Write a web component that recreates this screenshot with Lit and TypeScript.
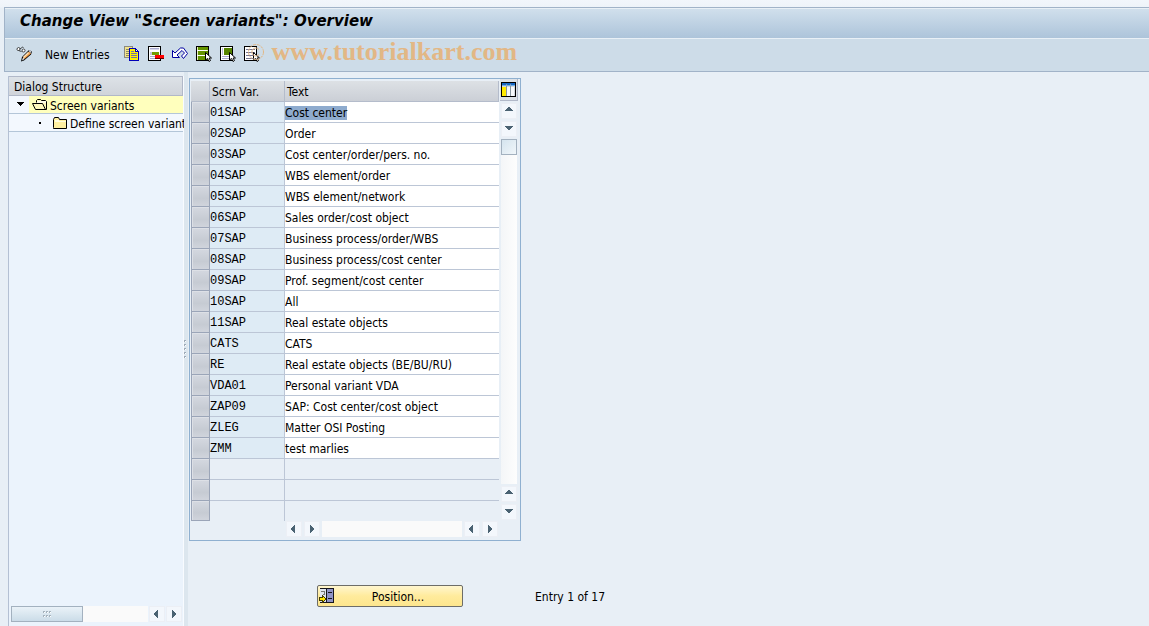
import { LitElement, html, svg, css } from "lit";
import { customElement } from "lit/decorators.js";
import { classMap } from "lit/directives/class-map.js";

interface Variant {
  code: string;
  text: string;
}

const VARIANTS: Variant[] = [
  { code: "01SAP", text: "Cost center" },
  { code: "02SAP", text: "Order" },
  { code: "03SAP", text: "Cost center/order/pers. no." },
  { code: "04SAP", text: "WBS element/order" },
  { code: "05SAP", text: "WBS element/network" },
  { code: "06SAP", text: "Sales order/cost object" },
  { code: "07SAP", text: "Business process/order/WBS" },
  { code: "08SAP", text: "Business process/cost center" },
  { code: "09SAP", text: "Prof. segment/cost center" },
  { code: "10SAP", text: "All" },
  { code: "11SAP", text: "Real estate objects" },
  { code: "CATS", text: "CATS" },
  { code: "RE", text: "Real estate objects (BE/BU/RU)" },
  { code: "VDA01", text: "Personal variant VDA" },
  { code: "ZAP09", text: "SAP: Cost center/cost object" },
  { code: "ZLEG", text: "Matter OSI Posting" },
  { code: "ZMM", text: "test marlies" },
];
const EMPTY_ROWS = [1, 2, 3];

const icon = (content: unknown, w = 16, h = 16) =>
  html`<svg width=${w} height=${h} viewBox="0 0 ${w} ${h}" shape-rendering="crispEdges" aria-hidden="true">${content}</svg>`;

const cursor = svg`<path d="M9.500 6.500v7.500l2-1.500l1.500 3l1.500-1l-1.500-2.500h2.500z" fill="#fff" stroke="#000" stroke-width="1" shape-rendering="auto"/>`;
const sheet = svg`<path d="M0 0h13v15h-13z" fill="#000"/><path d="M1 1h11v13h-11z" fill="#fff"/>`;

const icons = {
  display: icon(svg`
    <g shape-rendering="auto">
      <path d="M1 3.500q0-2 1.500-2t1.500 1.500t-1.500 1.500t-1.500-1zM4 3l2-1.500M6 5q0-2 1.500-2t1.500 1.500t-1.500 1.500t-1.500-1zM2.500 4.500l3 1M6 1l1.500 0.500" fill="#fff" stroke="#222" stroke-width="0.800"/>
      <path d="M5 15.500l1-4.500l7-7l3 1.500l-1 3l-7 6z" fill="#000"/>
      <path d="M7 11l6-5.500l2 2l-6.500 5.500z" fill="#f5a04a"/>
      <path d="M7 11l5-5l1 1l-5 5z" fill="#ffe5bd"/>
      <path d="M12.500 5l1-1l2 1.500l-1 1.500z" fill="#c9cad0"/>
      <path d="M6 14.500l1-3l1.500 1.500z" fill="#fff"/>
    </g>`),
  copy: icon(svg`
    <path d="M0 0h9v12h-9z" fill="#8a8a80"/><path d="M1 1h7v10h-7z" fill="#f4e38c"/>
    <path d="M2 3h3v1h-3zM2 5h3v1h-3zM2 7h3v1h-3zM2 9h3v1h-3z" fill="#8a8a60"/>
    <path d="M5 2h7v1h1v1h1v1h1v10h-10z" fill="#0000b8"/><path d="M6 3h5v3h3v8h-8z" fill="#fff200"/>
    <path d="M12 4v1h1v-1z" fill="#fff"/><path d="M7 5h3v1h-3zM7 7h6v1h-6zM7 9h6v1h-6zM7 11h6v1h-6z" fill="#7474a0"/>`),
  remove: icon(svg`${sheet}
    <path d="M2 2h9v2h-9zM2 10h7v1h-7zM2 12h9v1h-9z" fill="#a8a8cf"/><path d="M2 3h9v1h-9z" fill="#d8d8ec"/>
    <path d="M4 6h7v3h-7z" fill="#739d00"/><path d="M2 6h2v3h-2z" fill="#c8c8db"/>
    <path d="M7 9h9v4h-9z" fill="#ff0000"/><path d="M7 12h9v1h-9z" fill="#680000"/>`),
  undo: icon(svg`
    <path d="M0.500 4.500v7h7l-2.500-2.500l5-4.500l2.500 2.500l-3 3l2 2.500l4-5l-4-5.500h-3l-5.500 5z" fill="#fff" stroke="#0000a0" stroke-width="1" shape-rendering="auto"/>`),
  selectAll: icon(svg`${sheet}
    <path d="M1 1h11v13h-11z" fill="#e7efbf"/><path d="M2 1h10v3h-10zM2 5h10v4h-10zM2 10h10v4h-10z" fill="#649400"/>
    <path d="M1 4h10v1h-10zM1 9h8v1h-8z" fill="#fff"/>${cursor}`),
  selectBlock: icon(svg`${sheet}
    <path d="M4 2h8v7h-8z" fill="#568400"/><path d="M2 2h1v7h-1z" fill="#b9b9da"/>
    <path d="M2 10h7v1h-7zM2 12h7v1h-7z" fill="#a8a8cf"/>${cursor}`),
  deselect: icon(svg`${sheet}
    <path d="M2 3h9v1h-9zM2 6h9v1h-9zM2 9h7v1h-7zM2 12h7v1h-7z" fill="#777793"/>${cursor}`),
  config: icon(svg`
    <path d="M0 0h15v15h-15z" fill="#000"/><path d="M1 1h13v3h-13z" fill="#1767c4"/><path d="M1 4h13v10h-13z" fill="#d4d8dd"/>
    <path d="M1 5h4v9h-4z" fill="#ffea00"/><path d="M6 5h3v9h-3zM10 5h3v9h-3z" fill="#f7f9fb"/>
    <path d="M5 2h1v12h-1zM9 2h1v12h-1z" fill="#89959f"/><path d="M1 3h13v1h-13z" fill="#74aee3"/>`, 15, 15),
  folderOpen: icon(svg`
    <path d="M4.500 4.500v-2l1-1h3l1 1h4l1 1v8h-11l-3-6h10l3 6" fill="#fff9bd" stroke="#000" shape-rendering="auto"/>
    <path d="M5 3h9v2h-9z" fill="#fffde7"/>`, 16, 13),
  folder: icon(svg`
    <path d="M0.500 10.500v-8l1-2h4l1 2h7v9h-13z" fill="#fff0a0" stroke="#000" shape-rendering="auto"/>
    <path d="M2 3h4v1h7v1h-11z" fill="#fffde0"/>`, 15, 12),
  position: icon(svg`
    <path d="M1 0h14v15h-14z" fill="#16161c"/><path d="M1 1h6v13h-6z" fill="#dfe5ef"/><path d="M8 1h6v13h-6z" fill="#8f93c6"/>
    <path d="M2 3h4v1h-4zM4 6h2v1h-2zM5 4h1v2h-1z" fill="#777"/><path d="M9 4h4v1h-4zM9 10h4v1h-4z" fill="#16161c"/>
    <path d="M0 9h3v-2h1v1h1v1h1v1h1v2h-1v1h-1v1h-1v1h-1v-2h-3z" fill="#433c00"/><path d="M1 10h3v-1h1v1h1v2h-1v1h-1v-1h-3z" fill="#ffe600"/>`),
};

const arrows: Record<string, string> = {
  up: "M4 0h2v1h1v1h1v1h1v1h-8v-1h1v-1h1v-1h1z",
  down: "M1 1h8v1h-1v1h-1v1h-1v1h-2v-1h-1v-1h-1v-1h-1z",
  left: "M6 0v8h-1v-1h-1v-1h-1v-1h-1v-2h1v-1h1v-1h1v-1z",
  right: "M3 0v8h1v-1h1v-1h1v-1h1v-2h-1v-1h-1v-1h-1v-1z",
};

const scrollButton = (dir: string, label: string) =>
  html`<button class="scroll-btn" aria-label=${label}>${icon(svg`<path d=${arrows[dir]} fill="#4a6272"/>`, 10, 8)}</button>`;

const shared = css`
  * {
    box-sizing: border-box;
  }
  button {
    margin: 0;
    padding: 0;
    border: 0;
    background: none;
    color: inherit;
    font: inherit;
    display: flex;
    align-items: center;
    justify-content: center;
  }
  svg {
    display: block;
    flex: none;
  }
  .scroll-btn {
    width: 16px;
    height: 16px;
    flex: none;
    background: #f3f7fc;
    border: 1px solid #eceff5;
  }
`;

@customElement("dialog-tree")
export class DialogTree extends LitElement {
  static styles = [
    shared,
    css`
      :host {
        display: flex;
        flex-direction: column;
        width: 176px;
        flex: none;
        background: #ebf3fc;
        border-left: 1px solid #b4c0d3;
        border-right: 1px solid #f8fbff;
      }
      .heading {
        margin: 0;
        height: 20px;
        padding-left: 5px;
        font-size: 12px;
        font-weight: normal;
        line-height: 20px;
        background: linear-gradient(#dde2e7, #d0d4da);
        border: solid #b1b8c8;
        border-width: 1px 1px 1px 0;
      }
      .tree {
        list-style: none;
        margin: 0;
        padding: 0;
        flex: 1;
      }
      .node {
        display: flex;
        height: 18px;
        align-items: center;
        border-bottom: 1px solid #b4c6d8;
        background: #f3f8fe;
      }
      .twisty {
        width: 20px;
        padding-left: 2px;
        flex: none;
      }
      .link {
        flex: 1;
        height: 17px;
        display: flex;
        align-items: center;
        gap: 2px;
        padding-left: 3px;
        color: inherit;
        text-decoration: none;
        white-space: nowrap;
      }
      .link.current {
        background: #ffffbd;
      }
      .label {
        padding-top: 2px;
      }
      .child {
        padding-left: 21px;
      }
      .bullet {
        width: 2px;
        height: 2px;
        margin: 0 9px;
        flex: none;
        background: #000;
      }
      .scroll {
        display: flex;
        gap: 1px;
        padding: 0 1px 0 2px;
        margin-bottom: 4px;
      }
      .track {
        flex: 1;
        background: #fafafa;
      }
      .thumb {
        width: 72px;
        height: 16px;
        border: 1px solid #a3b1bf;
        background: linear-gradient(#eaf2f8, #cbdce8);
        display: flex;
        align-items: center;
        justify-content: center;
      }
    `,
  ];

  render() {
    return html`
      <h2 class="heading">Dialog Structure</h2>
      <ul class="tree">
        <li class="node">
          <button class="twisty" aria-label="Collapse">${icon(svg`<path d="M1 1h7v1h-1v1h-1v1h-1v1h-1v-1h-1v-1h-1v-1h-1z" fill="#000"/>`, 9, 8)}</button>
          <a class="link current" href="#variants">${icons.folderOpen}<span class="label">Screen variants</span></a>
        </li>
        <li class="node child">
          <span class="bullet"></span>
          <a class="link" href="#define">${icons.folder}<span class="label">Define screen variant</span></a>
        </li>
      </ul>
      <div class="scroll">
        <div class="track">
          <div class="thumb">
            ${icon(svg`<path d="M0 0h2v2h-2zM3 0h2v2h-2zM6 0h2v2h-2zM0 4h2v2h-2zM3 4h2v2h-2zM6 4h2v2h-2z" fill="#a4b2bd"/><path d="M1 1h1v1h-1zM4 1h1v1h-1zM7 1h1v1h-1zM1 5h1v1h-1zM4 5h1v1h-1zM7 5h1v1h-1z" fill="#fff"/>`, 8, 6)}
          </div>
        </div>
        ${scrollButton("left", "Scroll left")}${scrollButton("right", "Scroll right")}
      </div>
    `;
  }
}

@customElement("variant-table")
export class VariantTable extends LitElement {
  static styles = [
    shared,
    css`
      :host {
        display: grid;
        grid-template-columns: auto 18px;
        column-gap: 1px;
        width: max-content;
        border: 1px solid #8fb0d0;
        padding: 0 2px 3px 1px;
      }
      .grid {
        margin-top: 2px;
        border-collapse: separate;
        border-spacing: 0;
        table-layout: fixed;
        width: 308px;
      }
      .c-sel {
        width: 19px;
      }
      .c-code {
        width: 75px;
      }
      th,
      td {
        padding: 0;
        height: 21px;
        text-align: left;
        font-weight: normal;
      }
      th {
        background: linear-gradient(#dde1e5, #cbcfd6);
        border-bottom: 1px solid #b4bccb;
        border-right: 1px solid #b4bccb;
        padding: 2px 0 0 2px;
        line-height: 18px;
      }
      td {
        border-bottom: 1px solid #bcc6d6;
      }
      .code {
        background: #deebf5;
        border-right: 1px solid #bcc6d6;
        font: 12px/18px "Liberation Mono", "Courier New", monospace;
        padding-top: 2px;
      }
      .text {
        background: #fff;
      }
      .empty {
        background: transparent;
      }
      tr:last-child td {
        border-bottom: 0;
        height: 20px;
      }
      .field {
        display: block;
        width: 100%;
        height: 20px;
        margin: 0;
        padding: 2px 0 0;
        border: 0;
        outline: 0;
        background: none;
        font: inherit;
        color: inherit;
      }
      .field::selection {
        background: #8eabce;
        color: #000;
      }
      td.selector {
        border: solid #9ba5b8;
        border-width: 0 1px 1px;
      }
      tr:last-child td.selector {
        border-bottom: 1px solid #9ba5b8;
      }
      .row-btn {
        width: 100%;
        height: 100%;
        min-height: 19px;
        border: 1px solid #dde0e6;
        border-width: 1px 0 0 1px;
        background: linear-gradient(#d3d7df, #c6cbd3 60%, #d0d4dc);
      }
      .side {
        display: flex;
        flex-direction: column;
        align-items: center;
        gap: 2px;
        padding-bottom: 1px;
      }
      .config {
        width: 18px;
        height: 22px;
        background: #dce1e7;
        border: solid #b1b8c8;
        border-width: 0 1px 1px 0;
      }
      .v-track {
        flex: 1;
        width: 16px;
        background: linear-gradient(90deg, #f4f6f8, #fdfdfd);
      }
      .v-thumb {
        height: 16px;
        border: 1px solid #a3b1bf;
        background: linear-gradient(135deg, #d5e4ee, #f0f6fa);
      }
      .h-scroll {
        display: flex;
        gap: 2px;
        margin: 0 1px 0 95px;
      }
      .h-track {
        flex: 1;
        background: #fafafa;
      }
    `,
  ];

  firstUpdated() {
    const first = this.renderRoot.querySelector<HTMLInputElement>(".field");
    first?.focus();
    first?.select();
  }

  private row(v: Variant | null) {
    return html`<tr>
      <td class="selector"><button class="row-btn" aria-label="Select row"></button></td>
      <td class=${classMap({ code: true, empty: !v })}>${v?.code}</td>
      <td class=${classMap({ text: true, empty: !v })}>
        ${v ? html`<input class="field" aria-label="Text for ${v.code}" .value=${v.text} />` : ""}
      </td>
    </tr>`;
  }

  render() {
    return html`
      <table class="grid">
        <colgroup><col class="c-sel" /><col class="c-code" /><col /></colgroup>
        <thead>
          <tr><th></th><th>Scrn Var.</th><th>Text</th></tr>
        </thead>
        <tbody>
          ${VARIANTS.map((v) => this.row(v))} ${EMPTY_ROWS.map(() => this.row(null))}
        </tbody>
      </table>
      <div class="side">
        <button class="config" aria-label="Table settings">${icons.config}</button>
        ${scrollButton("up", "Scroll up")}${scrollButton("down", "Scroll down")}
        <div class="v-track"><div class="v-thumb"></div></div>
        ${scrollButton("up", "Page up")}${scrollButton("down", "Page down")}
      </div>
      <div class="h-scroll">
        ${scrollButton("left", "Scroll left")}${scrollButton("right", "Scroll right")}
        <div class="h-track"></div>
        ${scrollButton("left", "Page left")}${scrollButton("right", "Page right")}
      </div>
    `;
  }
}

@customElement("app-root")
export class AppRoot extends LitElement {
  static styles = [
    shared,
    css`
      :host {
        display: flex;
        flex-direction: column;
        min-height: 100vh;
        box-sizing: border-box;
        padding: 7px 0 0 4px;
        background: linear-gradient(#f2f6fb, #eef3f9 7px, #e8eff6 8px);
        color: #000;
        font: 12px/16px Tahoma, "DejaVu Sans Condensed", "DejaVu Sans", sans-serif;
        font-stretch: condensed;
      }
      .top {
        border: solid #a1b3c8;
        border-width: 1px 0 1px 1px;
        background: #cddce8;
      }
      .title {
        margin: 0;
        height: 31px;
        padding: 0 15px;
        font: italic bold 15px/25px Verdana, "DejaVu Sans", sans-serif;
        background: linear-gradient(#d0dfec, #adc4da);
        border: solid #e9f0f6;
        border-width: 1px 0;
      }
      .toolbar {
        display: flex;
        align-items: center;
        gap: 8px;
        height: 32px;
        padding: 0 11px 2px;
      }
      .new {
        margin: 0 6px 0 5px;
        padding-top: 2px;
      }
      .watermark {
        display: flex;
        align-items: center;
        gap: 8px;
        margin-left: -20px;
        padding-bottom: 4px;
        color: #e2b785;
      }
      .site {
        font: bold 26px/28px "Liberation Serif", "Times New Roman", serif;
      }
      .body {
        flex: 1;
        display: flex;
        padding-left: 4px;
      }
      dialog-tree {
        margin-top: 4px;
      }
      .splitter {
        width: 4px;
        background: #dce6ee;
        display: flex;
        align-items: center;
      }
      .content {
        flex: 1;
        padding: 6px 0 0 1px;
      }
      .footer {
        display: flex;
        align-items: center;
        gap: 72px;
        margin: 44px 0 0 128px;
      }
      .position {
        width: 146px;
        height: 22px;
        padding: 0 1px;
        border: 1px solid #6d6d68;
        border-radius: 2px;
        background: linear-gradient(#fff6cf, #ffeb9c 50%, #fde68d);
      }
      .position-label {
        flex: 1;
        padding-top: 2px;
        text-align: center;
      }
      .entry {
        padding-top: 2px;
      }
    `,
  ];

  render() {
    return html`
      <header class="top">
        <h1 class="title">Change View "Screen variants": Overview</h1>
        <div class="toolbar" role="toolbar">
          <button aria-label="Display or change">${icons.display}</button>
          <button class="new">New Entries</button>
          <button aria-label="Copy as">${icons.copy}</button>
          <button aria-label="Delete">${icons.remove}</button>
          <button aria-label="Undo change">${icons.undo}</button>
          <button aria-label="Select all">${icons.selectAll}</button>
          <button aria-label="Select block">${icons.selectBlock}</button>
          <button aria-label="Deselect all">${icons.deselect}</button>
          <div class="watermark">
            <svg width="16" height="16" viewBox="0 0 16 16" aria-hidden="true">
              <circle cx="8" cy="8" r="7.500" fill="none" stroke="#e2b785" stroke-width="1" stroke-dasharray="3 1" />
              <path d="M11 5.500a4 4 0 1 0 0 5" fill="none" stroke="#e2b785" />
            </svg>
            <span class="site">www.tutorialkart.com</span>
          </div>
        </div>
      </header>
      <div class="body">
        <dialog-tree></dialog-tree>
        <div class="splitter">
          ${icon(svg`<path d="M0 0h2v2h-2zM0 4h2v2h-2zM0 8h2v2h-2zM0 12h2v2h-2zM0 16h2v2h-2z" fill="#9daab8"/><path d="M1 1h1v1h-1zM1 5h1v1h-1zM1 9h1v1h-1zM1 13h1v1h-1zM1 17h1v1h-1z" fill="#fff"/>`, 3, 18)}
        </div>
        <main class="content">
          <variant-table></variant-table>
          <div class="footer">
            <button class="position">${icons.position}<span class="position-label">Position...</span></button>
            <span class="entry">Entry 1 of 17</span>
          </div>
        </main>
      </div>
    `;
  }
}
